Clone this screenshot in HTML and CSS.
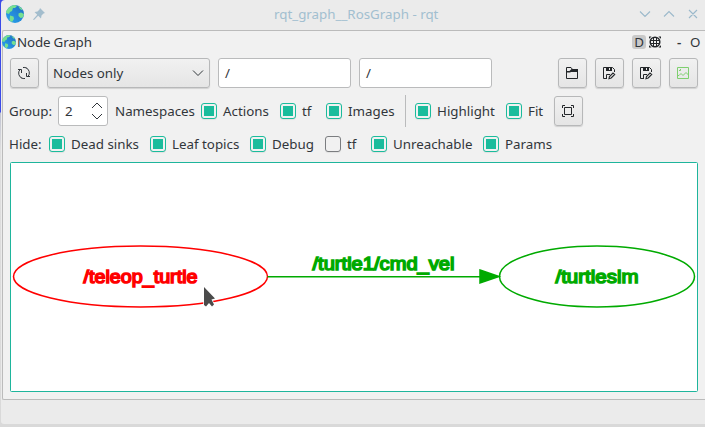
FILE: index.html
```html
<!DOCTYPE html>
<html lang="en">
<head>
<meta charset="utf-8">
<title>rqt_graph__RosGraph - rqt</title>
<link rel="stylesheet" href="styles.css">
</head>
<body>
<svg class="defs" width="0" height="0">
  <defs>
    <linearGradient id="sea" x1="0" y1="1" x2="1" y2="0"><stop offset="0" stop-color="#2ba7ee"/><stop offset="1" stop-color="#1c6cc4"/></linearGradient>
    <symbol id="globe" viewBox="0 0 18 18">
      <circle cx="9" cy="9" r="9" fill="url(#sea)"/>
      <path d="M2 3.500Q5 0 9 0L11 1 9 3 7 3 6 6 4 7 3 9 0 8Q0 5 2 3.500ZM4 10.500 7.500 11.500 8 14 6 17 3.500 15.500ZM12.500 8.500 15 7.500 18 9 17 12.500 14.500 13 12.500 11ZM12 1 15.500 3 16.500 5.500 14 4Z" fill="#76df91"/>
    </symbol>
    <symbol id="save" viewBox="0 0 14 14">
      <path d="M5 12.500H1.500V1.500H10.500L12.500 3.500V6M4.500 12V8.500H8" fill="none" stroke="#232629"/>
      <path d="M4 1H10V5H4ZM7 2V4H8V2Z" fill="#232629" fill-rule="evenodd"/>
      <path d="M7 12.700 7.500 10.500 11 7 12.700 8.500 9.200 12Z" fill="none" stroke="#232629" stroke-width="1.100"/>
    </symbol>
  </defs>
</svg>
<div class="desktop">
<div class="window">
  <header class="titlebar">
    <svg class="app-icon" width="18" height="18"><use href="#globe"/></svg>
    <svg class="pin" width="12" height="12" viewBox="0 0 12 12"><path d="M7 0 12 5 10.500 5.500 8.500 7.500 8 10.500 5.200 7.800 1 12 0 11.500 4.200 6.800 1.500 4 4.500 3.500 6.500 1.500Z" fill="#a3bdcd"/></svg>
    <h1 class="title">rqt_graph__RosGraph - rqt</h1>
    <svg class="controls" width="60" height="12" viewBox="0 0 60 12"><path d="M1 3.500 6 8.500 11 3.500M25 8.500 30 3.500 35 8.500M50 2 58 10M58 2 50 10" fill="none" stroke="#9bb9cb" stroke-width="1.100"/></svg>
  </header>
  <main class="panel">
    <div class="dock">
      <svg width="14" height="14"><use href="#globe"/></svg>
      <span class="dock-title">Node Graph</span>
      <span class="key">D</span>
      <svg class="ring" width="12" height="12" viewBox="0 0 12 12"><circle cx="6" cy="6" r="4.800" fill="none" stroke="#232629" stroke-width="1.500"/><path d="M4.500 1.500V10.500M7.500 1.500V10.500M1.500 4.500H10.500M1.500 7.500H10.500" fill="none" stroke="#232629"/><path d="M0 .5H2.500L.5 2.500H0ZM9.500 .5H12V2.500H11.500ZM0 9.500H.5L2.500 11.500H0ZM11.500 9.500H12V11.500H9.500Z" fill="#232629"/></svg>
      <span class="dash">-</span>
      <span class="oh">O</span>
    </div>
    <div class="row toolbar">
      <div class="button"><svg width="14" height="14" viewBox="0 0 14 14"><path d="M5 12.200A5.500 5.500 0 0 1 3 3.500M1 3.500H4.500V7M9 1.800A5.500 5.500 0 0 1 11 10.500M13 10.500H9.500V7M6 1.500Q8 1.200 9.500 2M8 12.500Q6 12.800 4.500 12" fill="none" stroke="#31363b"/></svg></div>
      <div class="button combo"><span>Nodes only</span><svg width="12" height="8" viewBox="0 0 12 8"><path d="M1 1.500 6 6.500 11 1.500" fill="none" stroke="#31363b"/></svg></div>
      <div class="field">/</div>
      <div class="field">/</div>
      <span></span>
      <div class="button"><svg width="14" height="14" viewBox="0 0 14 14"><path d="M1.500 12.500V1.500H6L7.500 3.500H12.500V12.500Z" fill="none" stroke="#232629"/><path d="M1 5H4.500L6.500 3H13V6H6L5 6.500H1Z" fill="#232629"/></svg></div>
      <div class="button"><svg width="14" height="14"><use href="#save"/></svg></div>
      <div class="button"><svg width="14" height="14"><use href="#save"/></svg></div>
      <div class="button"><svg width="14" height="14" viewBox="0 0 14 14"><path d="M1.500 1.500H12.500V12.500H1.500ZM1.500 9.500H3L5 7.500 7 9.500 10 6.500 12.500 9M3 4.500H4.500V3" fill="none" stroke="#7fd06f"/></svg></div>
    </div>
    <div class="row group">
      <span>Group:</span>
      <div class="field spin"><span>2</span><svg width="12" height="18" viewBox="0 0 12 18"><path d="M1 6 6 1 11 6M1 12 6 17 11 12" fill="none" stroke="#31363b"/></svg></div>
      <span>Namespaces</span>
      <i class="check on"></i><span>Actions</span>
      <i class="check on"></i><span>tf</span>
      <i class="check on"></i><span>Images</span>
      <i class="separator"></i>
      <i class="check on"></i><span>Highlight</span>
      <i class="check on"></i><span>Fit</span>
      <div class="button"><svg width="14" height="14" viewBox="0 0 14 14"><path d="M3.500 3.500H10.500V10.500H3.500ZM1.500 4V1.500H4M10 1.500H12.500V4M12.500 10V12.500H10M4 12.500H1.500V10" fill="none" stroke="#232629"/></svg></div>
    </div>
    <div class="row hide">
      <span>Hide:</span>
      <i class="check on"></i><span>Dead sinks</span>
      <i class="check on"></i><span>Leaf topics</span>
      <i class="check on"></i><span>Debug</span>
      <i class="check"></i><span>tf</span>
      <i class="check on"></i><span>Unreachable</span>
      <i class="check on"></i><span>Params</span>
    </div>
    <svg class="graph" width="688" height="230" viewBox="10 162 688 230">
      <rect x="10.500" y="162.500" width="687" height="229" rx="1" fill="#fff" stroke="#1eb59c"/>
      <g class="node red"><ellipse cx="140.500" cy="276.500" rx="127" ry="30.500"/><text x="83.500" y="283" textLength="114" lengthAdjust="spacingAndGlyphs">/teleop_turtle</text></g>
      <g class="node green"><path d="M267.500 276.800H481"/><path class="arrow" d="M480 270 499 276.500 480 283Z"/><text x="312.500" y="270" textLength="142" lengthAdjust="spacingAndGlyphs">/turtle1/cmd_vel</text></g>
      <g class="node green"><ellipse cx="597" cy="276.500" rx="97.500" ry="30.500"/><text x="555.500" y="283" textLength="83" lengthAdjust="spacingAndGlyphs">/turtlesim</text></g>
      <path d="M204 287V305L206 306.500 209 303 212 306.500 214 304.500 211.500 299.500 215 298.500Z" fill="#4b4b4b" stroke="#fff" stroke-width="1.500" paint-order="stroke"/>
    </svg>
  </main>
</div>
</div>
</body>
</html>
```
FILE: styles.css
```css
* { box-sizing: border-box; }
body { margin: 0; width: 705px; height: 427px; overflow: hidden; font: 13.333px/18px "Noto Sans", sans-serif; color: #31363b; }
.defs { position: absolute; }
svg { display: block; }
.desktop { height: 427px; padding-left: 1px; background: linear-gradient(#3b4ae8 112px, #c0c3d2 113px, #dedede 150px, #d9d9d9); }
.window { height: 424px; background: #ebebeb; border-radius: 4px 0 0 3px; overflow: hidden; }
.titlebar { display: flex; align-items: flex-start; height: 30px; }
.app-icon { margin: 5px 0 0 5px; }
.pin { margin: 8px 0 0 9px; }
.title { margin: 5px 0 0; padding-left: 229px; font-size: 13.333px; font-weight: 400; line-height: 18px; color: #a2bfd0; flex: 1; }
.controls { margin: 8px 6px 0 0; }
.panel { height: 370px; margin-left: 1px; background: #f1f1f1; border: 1px solid #bbb; border-right: 0; border-radius: 2px 0 0 2px; }
.dock { display: flex; align-items: center; height: 22px; padding-right: 4px; margin-left: -1px; }
.dock-title { margin-left: 1px; flex: 1; letter-spacing: -.15px; }
.key { width: 14px; height: 14px; line-height: 14px; text-align: center; background: #c9c9c9; border-radius: 3px; }
.ring { margin-left: 3px; }
.dash { width: 5px; margin-left: 16px; font-weight: 600; }
.oh { width: 11px; margin-left: 8px; }
.row { display: grid; align-items: center; margin-left: 6px; white-space: nowrap; }
.toolbar { height: 30px; margin: 5px 7px 0 7px; grid-template-columns: 29px 163px 133px 133px 1fr 29px 29px 29px 29px; column-gap: 8px; }
.button { display: flex; align-items: center; justify-content: center; height: 30px; border: 1px solid #b7b8b9; border-radius: 3px; background: linear-gradient(#f1f1f1, #e5e5e5); box-shadow: 0 1px 1px #0002; }
.button > svg { flex: none; }
.toolbar .button:not(.combo), .group .button { justify-content: flex-start; padding-left: 6px; }
.combo { justify-content: space-between; padding: 0 5px; }
.field { height: 30px; border: 1px solid #babbbc; border-radius: 3px; background: #fff; padding: 5px 6px; }
.group { height: 32px; margin-top: 7px; grid-template-columns: 49px 57px 86px 22px 57px 22px 24px 22px 57px 10px 22px 69px 22px 26px 29px; }
.spin { width: 50px; display: flex; align-items: center; justify-content: space-between; padding: 0 4px 0 6px; }
.check { display: block; width: 16px; height: 16px; border: 1px solid #7b7d80; border-radius: 3px; box-shadow: 0 1px 1px #0001; }
.on { border-color: #1abc9c; background: #1abc9c content-box; padding: 2px; }
.separator { height: 32px; width: 1px; background: #babbbc; }
.hide { height: 34px; grid-template-columns: 40px 22px 79px 22px 78px 22px 53px 22px 24px 22px 90px 22px 60px; }
.graph { margin: 1px 0 0 7px; }
.node { stroke-width: 1.5; fill: none; }
.node text { font-family: "Liberation Sans", sans-serif; font-size: 18px; stroke-width: 1.5; }
.red { stroke: #f00; }
.red text { fill: #f00; }
.green { stroke: #00aa00; }
.green text, .arrow { fill: #00aa00; }
```
